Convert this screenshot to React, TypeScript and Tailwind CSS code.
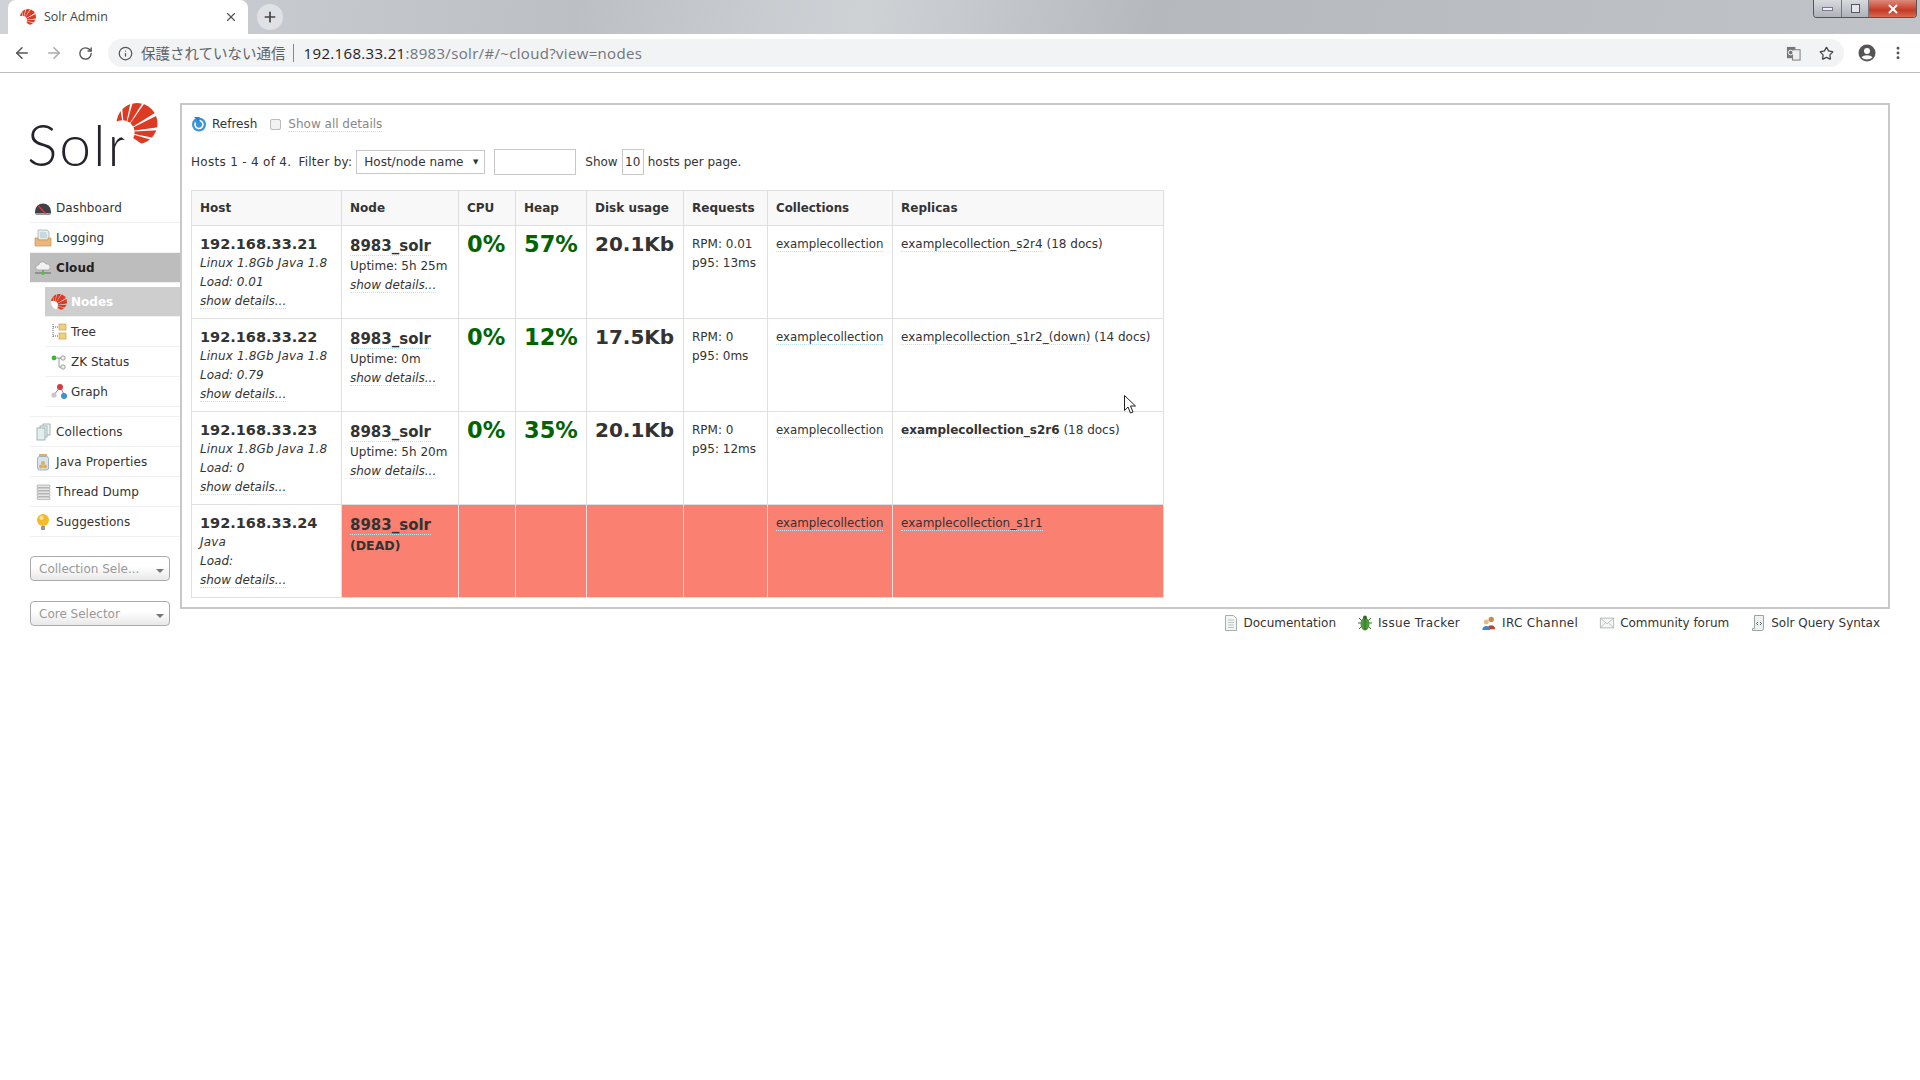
import { ArrowLeft, ArrowRight, RotateCw, Info, Star, MoreVertical, Plus, X } from 'lucide-react';
import type { ReactNode } from 'react';

type Host = {
  ip: string;
  info: string;
  load: string;
  uptime?: string;
  cpu?: string;
  heap?: string;
  disk?: string;
  rpm?: string;
  p95?: string;
  replica: ReactNode;
  dead?: boolean;
};

const hosts: Host[] = [
  {
    ip: '192.168.33.21', info: 'Linux 1.8Gb Java 1.8', load: 'Load: 0.01', uptime: 'Uptime: 5h 25m',
    cpu: '0%', heap: '57%', disk: '20.1Kb', rpm: 'RPM: 0.01', p95: 'p95: 13ms',
    replica: <><Dotted>examplecollection_s2r4</Dotted> (18 docs)</>,
  },
  {
    ip: '192.168.33.22', info: 'Linux 1.8Gb Java 1.8', load: 'Load: 0.79', uptime: 'Uptime: 0m',
    cpu: '0%', heap: '12%', disk: '17.5Kb', rpm: 'RPM: 0', p95: 'p95: 0ms',
    replica: <><Dotted>examplecollection_s1r2_(down)</Dotted> (14 docs)</>,
  },
  {
    ip: '192.168.33.23', info: 'Linux 1.8Gb Java 1.8', load: 'Load: 0', uptime: 'Uptime: 5h 20m',
    cpu: '0%', heap: '35%', disk: '20.1Kb', rpm: 'RPM: 0', p95: 'p95: 12ms',
    replica: <><Dotted><b>examplecollection_s2r6</b></Dotted> (18 docs)</>,
  },
  {
    ip: '192.168.33.24', info: 'Java', load: 'Load:', dead: true,
    replica: <Dotted>examplecollection_s1r1</Dotted>,
  },
];

function Dotted({ children }: { children: ReactNode }) {
  return <span className="border-b border-dotted border-[#bde3f5]">{children}</span>;
}

// the Solr sun: red rays fanning out of a point low on the left
function SolrSun({ className, id }: { className: string; id: string }) {
  const fx = 19;
  const fy = 71;
  const rays = [[-125, -100], [-95, -78], [-74, -58], [-55, -32], [-27, -8], [-3, 11], [16, 34]];
  const pt = (a: number) => `${fx + 150 * Math.cos((a * Math.PI) / 180)},${fy + 150 * Math.sin((a * Math.PI) / 180)}`;
  return (
    <svg viewBox="0 0 100 100" className={className}>
      <clipPath id={id}><circle cx="50" cy="50" r="50" /></clipPath>
      <g clipPath={`url(#${id})`}>
        {rays.map(([a, b]) => (
          <polygon key={a} points={`${fx},${fy} ${pt(a)} ${pt(b)}`} fill="#dc3a22" />
        ))}
        <circle cx="14" cy="72" r="30" fill="white" />
      </g>
    </svg>
  );
}

function Dashboard() {
  return (
    <svg viewBox="0 0 18 18" className="w-[18px] h-[18px]">
      <path d="M1 12.500a8 8 0 0 1 16 0v2H1z" fill="#3f3f46" />
      <path d="M1 14.500h16l-1 1.500H2z" fill="#9a9a9a" />
      <path d="M4.500 7l7 7.500" stroke="#e33" strokeWidth="1.200" />
    </svg>
  );
}
function Logging() {
  return (
    <svg viewBox="0 0 18 18" className="w-[18px] h-[18px]">
      <path d="M4 1h9l2 2v8H4z" fill="#e4efe9" stroke="#9ab" strokeWidth=".7" />
      <path d="M6 4h6M6 6h7M6 8h7" stroke="#9bb" strokeWidth=".8" />
      <path d="M1 9h3v2h10V9h3v8H1z" fill="#eab77c" stroke="#c89258" strokeWidth=".7" />
    </svg>
  );
}
function CloudIcon() {
  return (
    <svg viewBox="0 0 18 18" className="w-[18px] h-[18px]">
      <path d="M4 11a2.500 2.500 0 0 1 .5-5 4 4 0 0 1 7.500-1 3 3 0 0 1 2 6z" fill="#f2f2f5" stroke="#999" strokeWidth=".7" />
      <path d="M1 14h16" stroke="#666" strokeWidth="1" />
      <path d="M9 11v3" stroke="#666" strokeWidth="1" />
      <circle cx="9" cy="14.500" r="1.600" fill="#4c3" />
    </svg>
  );
}
function TreeIcon() {
  return (
    <svg viewBox="0 0 16 18" className="w-4 h-[18px]">
      <path d="M2 1v14M2 4h6M2 13h6" stroke="#667" strokeWidth="1" strokeDasharray="1 1" fill="none" />
      <rect x="8" y="1" width="7" height="6" fill="#f0cf7e" stroke="#c9a24f" strokeWidth=".7" />
      <rect x="8" y="10" width="7" height="6" fill="#f0cf7e" stroke="#c9a24f" strokeWidth=".7" />
    </svg>
  );
}
function ZkIcon() {
  return (
    <svg viewBox="0 0 16 18" className="w-4 h-[18px]">
      <path d="M3 5h8M8 5v9h3" stroke="#999" strokeWidth="1" fill="none" />
      <circle cx="3" cy="5" r="2.400" fill="#3fb535" />
      <circle cx="12" cy="5" r="2.200" fill="#eee" stroke="#888" strokeWidth=".8" />
      <circle cx="12" cy="14" r="2.200" fill="#eee" stroke="#888" strokeWidth=".8" />
    </svg>
  );
}
function GraphIcon() {
  return (
    <svg viewBox="0 0 16 18" className="w-4 h-[18px]">
      <path d="M3 12l6-8 5 9" stroke="#888" strokeWidth="1" fill="none" />
      <circle cx="9" cy="4" r="3" fill="#d33c40" />
      <circle cx="3" cy="12" r="2.600" fill="#c8c8c8" />
      <circle cx="13" cy="13" r="3" fill="#3c8fd8" />
    </svg>
  );
}
function CollectionsIcon() {
  return (
    <svg viewBox="0 0 18 18" className="w-[18px] h-[18px]">
      <rect x="9" y="1" width="7" height="11" fill="#eef3f3" stroke="#8fa5a8" strokeWidth=".8" />
      <rect x="6" y="3" width="7" height="11" fill="#eef3f3" stroke="#8fa5a8" strokeWidth=".8" />
      <rect x="3" y="5" width="8" height="12" fill="#e3eded" stroke="#8fa5a8" strokeWidth=".8" />
    </svg>
  );
}
function JavaIcon() {
  return (
    <svg viewBox="0 0 18 18" className="w-[18px] h-[18px]">
      <rect x="5" y="1" width="8" height="2.500" fill="#e0b060" />
      <rect x="3.500" y="3.500" width="11" height="13.500" rx="2" fill="#d6e2ee" stroke="#8fa5b8" strokeWidth=".8" />
      <circle cx="9" cy="10" r="2" fill="#dfae52" />
      <circle cx="7" cy="13.500" r="2" fill="#dfae52" />
      <circle cx="11" cy="13.500" r="2" fill="#dfae52" />
    </svg>
  );
}
function ThreadIcon() {
  return (
    <svg viewBox="0 0 18 18" className="w-[18px] h-[18px]">
      {[2, 5, 8, 11, 14].map((y) => (
        <rect key={y} x="3" y={y} width="13" height="2.600" rx="1" fill="#e4e4e4" stroke="#999" strokeWidth=".6" />
      ))}
    </svg>
  );
}
function BulbIcon() {
  return (
    <svg viewBox="0 0 18 18" className="w-[18px] h-[18px]">
      <circle cx="9" cy="7" r="6" fill="#f6b92c" />
      <circle cx="7.500" cy="5" r="2" fill="#fde9a8" />
      <rect x="7" y="13" width="4" height="4" fill="#999" />
    </svg>
  );
}
function DocIcon() {
  return (
    <svg viewBox="0 0 16 18" className="w-4 h-[18px]">
      <path d="M2.500 1.500h8l3 3v12h-11z" fill="#f4f6f4" stroke="#a5aeaa" />
      <path d="M5 6h6M5 8.500h6M5 11h6M5 13.500h6" stroke="#bbc4c0" />
    </svg>
  );
}
function BugIcon() {
  return (
    <svg viewBox="0 0 16 18" className="w-4 h-[18px]">
      <path d="M2 4l3 3M14 4l-3 3M1 9h3M15 9h-3M2 15l3-3M14 15l-3-3" stroke="#3c6b2c" strokeWidth="1" />
      <ellipse cx="8" cy="10" rx="4.500" ry="6.500" fill="#4e9a3a" />
      <circle cx="8" cy="3.500" r="2" fill="#2f6b26" />
      <path d="M8 5v11" stroke="#2f6b26" />
    </svg>
  );
}
function PeopleIcon() {
  return (
    <svg viewBox="0 0 18 18" className="w-4 h-4">
      <circle cx="11.500" cy="5" r="3" fill="#c98a4a" />
      <path d="M7 16c0-6 9-6 9 0z" fill="#b8452f" />
      <circle cx="6" cy="8" r="2.800" fill="#e8b98a" />
      <path d="M1.500 17c0-6 9-6 9 0z" fill="#3f86c8" />
    </svg>
  );
}
function MailIcon() {
  return (
    <svg viewBox="0 0 18 18" className="w-4 h-4">
      <rect x="1.500" y="3.500" width="15" height="11" fill="#f5f7f7" stroke="#aab4b4" />
      <path d="M2 4l7 6 7-6M2 14l5-5M16 14l-5-5" stroke="#b4bcbc" fill="none" />
    </svg>
  );
}
function ScriptIcon() {
  return (
    <svg viewBox="0 0 16 18" className="w-4 h-[18px]">
      <path d="M4.500 1.500h9v13a2 2 0 0 1-2 2h-9v-2h2z" fill="#eef2ee" stroke="#9aa5a0" />
      <path d="M8 8l-1.500 1.500L8 11M10 8l1.500 1.500L10 11" stroke="#557" fill="none" />
    </svg>
  );
}

function NavRow({ icon, label, active }: { icon: ReactNode; label: string; active?: boolean }) {
  return (
    <div className={`flex items-center h-[30px] pl-[4px] border-b border-[#f0f0f0] ${active ? 'bg-[#bdbdbd] font-bold text-[#222]' : ''}`}>
      <span className="w-[18px] flex justify-center">{icon}</span>
      <span className="ml-[4px] tracking-[0.1px]">{label}</span>
    </div>
  );
}

function SubRow({ icon, label, active }: { icon: ReactNode; label: string; active?: boolean }) {
  return (
    <div className={`flex items-center h-[30px] pl-[6px] border-b border-[#f0f0f0] ${active ? 'bg-[#cecece] text-white font-bold' : ''}`}>
      <span className="w-4 flex justify-center">{icon}</span>
      <span className="ml-[4px]">{label}</span>
    </div>
  );
}

function Selector({ label }: { label: string }) {
  return (
    <div className="relative h-[25px] w-[140px] rounded-[4px] border border-[#aaa] bg-[linear-gradient(#fff_40%,#e8e8e8)] flex items-center pl-[8px] text-[#999]">
      {label}
      <span className="absolute right-[5px] top-[12px] border-x-[4px] border-t-[4px] border-x-transparent border-t-[#777]" />
    </div>
  );
}

function FooterLink({ icon, label, wide }: { icon: ReactNode; label: string; wide?: boolean }) {
  return (
    <span className="flex items-center gap-[5px]">
      {icon}
      <span className={wide ? 'tracking-[0.3px]' : ''}>{label}</span>
    </span>
  );
}

const th = 'border border-[#dfdfdf] bg-[#f8f8f8] px-2 text-left font-bold text-[#333] h-[35px]';
const td = 'border border-[#dfdfdf] align-top px-2';

export default function App() {
  return (
    <div className="min-h-screen bg-white text-[12px] text-[#333] font-['DejaVu_Sans',sans-serif]">
      {/* browser chrome */}
      <div className="relative h-[34px] bg-[linear-gradient(100deg,#cfd2d6,#bcc0c5_30%,#cfd2d5_45%,#b5b9be_60%,#c0c4c8_100%)] flex items-end pl-2">
        <div className="w-[240px] h-[34px] bg-white rounded-t-[8px] flex items-center pl-[12px] pr-[10px] gap-[6px] text-[12.500px] text-[#444] font-['Open_Sans',sans-serif]">
          <SolrSun id="fav" className="w-[16px] h-[16px]" />
          <span className="ml-[2px] flex-1">Solr Admin</span>
          <X size={14} strokeWidth={2} className="text-[#555]" />
        </div>
        <div className="self-center ml-[9px] w-[26px] h-[26px] rounded-full bg-[#dfe1e5] flex items-center justify-center">
          <Plus size={16} strokeWidth={2.500} className="text-[#444]" />
        </div>
        <div className="absolute top-0 right-[3px] h-[18px] flex rounded-b-[4px] border border-t-0 border-[#555] overflow-hidden">
          <div className="w-[28px] bg-[linear-gradient(#d8dade,#aeb2b8)] border-r border-[#777] flex items-center justify-center">
            <span className="w-[11px] h-[4px] bg-[#eef] border border-[#778]" />
          </div>
          <div className="w-[27px] bg-[linear-gradient(#d8dade,#aeb2b8)] border-r border-[#777] flex items-center justify-center">
            <span className="w-[9px] h-[9px] border border-[#556] bg-[#e4e6ea]" />
          </div>
          <div className="w-[47px] bg-[linear-gradient(#dc8a7a,#c53a25_60%,#d86a50)] flex items-center justify-center">
            <X size={14} strokeWidth={3.500} className="text-white" />
          </div>
        </div>
      </div>
      <div className="h-[39px] border-b-[1px] border-[#bdbdbd] flex items-center pl-[13px] pr-[14px] bg-white">
        <ArrowLeft size={18} strokeWidth={2} className="text-[#555]" />
        <ArrowRight size={18} strokeWidth={2} className="text-[#aaa] ml-[14px]" />
        <RotateCw size={15} strokeWidth={2.200} className="text-[#555] ml-[15px]" />
        <div className="ml-[15px] flex-1 h-[28px] rounded-full bg-[#f1f3f4] flex items-center pl-[10px] pr-[10px] text-[15px] tracking-[0.33px] font-['Open_Sans','Noto_Sans_CJK_JP',sans-serif]">
          <Info size={15} strokeWidth={2} className="text-[#555]" />
          <span className="ml-[8px] text-[14.500px] tracking-normal text-[#5f6368] font-['Noto_Sans_CJK_JP',sans-serif]">保護されていない通信</span>
          <span className="ml-[7px] mr-[10px] h-[18px] w-px bg-[#888]" />
          <span className="text-[#222]">192.168.33.21</span>
          <span className="text-[#70757a]">:8983/solr/#/~cloud?view=nodes</span>
          <svg viewBox="0 0 16 16" className="ml-auto mr-[18px] w-[15px] h-[15px]">
            <rect x="1" y="1" width="9" height="12" fill="#777" />
            <rect x="7" y="4" width="8" height="11" fill="#eee" stroke="#777" />
            <circle cx="5" cy="7" r="2.500" fill="none" stroke="#fff" />
          </svg>
          <Star size={15} strokeWidth={2} className="text-[#444]" />
        </div>
        <svg viewBox="0 0 18 18" className="ml-[14px] w-[18px] h-[18px]">
          <circle cx="9" cy="9" r="8.500" fill="#555" />
          <circle cx="9" cy="7" r="3" fill="#fff" />
          <path d="M3.500 13.500c2-3 9-3 11 0-3 2.500-8 2.500-11 0z" fill="#fff" />
        </svg>
        <MoreVertical size={16} strokeWidth={2.400} className="ml-[14px] text-[#555]" />
      </div>

      {/* solr admin */}
      <div className="flex pl-[30px] pr-[30px] pt-[30px]">
        <aside className="w-[150px] shrink-0 text-[#333]">
          <div className="relative h-[90px]">
            <span className="absolute left-[-3px] top-[3px] text-[57px] leading-[76px] tracking-[2px] font-light text-[#23232d] font-['Lato',sans-serif]">Solr</span>
            <SolrSun id="logo" className="absolute left-[86px] top-0 w-[42px] h-[41px]" />
          </div>
          <div>
            <NavRow icon={<Dashboard />} label="Dashboard" />
            <NavRow icon={<Logging />} label="Logging" />
            <NavRow icon={<CloudIcon />} label="Cloud" active />
            <div className="ml-[15px] mt-[4px] mb-[9px]">
              <SubRow icon={<SolrSun id="nodes" className="w-[16px] h-[16px]" />} label="Nodes" active />
              <SubRow icon={<TreeIcon />} label="Tree" />
              <SubRow icon={<ZkIcon />} label="ZK Status" />
              <SubRow icon={<GraphIcon />} label="Graph" />
            </div>
            <div className="border-t border-[#f0f0f0]">
              <NavRow icon={<CollectionsIcon />} label="Collections" />
              <NavRow icon={<JavaIcon />} label="Java Properties" />
              <NavRow icon={<ThreadIcon />} label="Thread Dump" />
              <NavRow icon={<BulbIcon />} label="Suggestions" />
            </div>
          </div>
          <div className="mt-[19px] flex flex-col gap-[20px]">
            <Selector label="Collection Sele..." />
            <Selector label="Core Selector" />
          </div>
        </aside>

        <div className="flex-1">
          <main className="h-[506px] border-[2px] border-[#c8c8c8] px-[9px] pt-[9px]">
            <div className="flex items-center h-[20px]">
              <svg viewBox="0 0 16 16" className="w-[16px] h-[16px]">
                <circle cx="8" cy="8.500" r="7" fill="#3b93d8" />
                <path d="M8 4.500a4 4 0 1 1-3.500 2" stroke="#fff" strokeWidth="1.600" fill="none" />
                <path d="M3 1h5.500v5.500z" fill="#2a7fc8" />
              </svg>
              <span className="ml-[5px]"><Dotted>Refresh</Dotted></span>
              <span className="ml-[13px] w-[11px] h-[11px] rounded-[2px] border border-[#bbb] bg-[#f2f2f2]" />
              <span className="ml-[7px] text-[#888]"><Dotted>Show all details</Dotted></span>
            </div>
            <div className="flex items-center mt-[15px] h-[26px]">
              <span className="tracking-[0.3px]">Hosts 1 - 4 of 4.</span>
              <span className="ml-[7px] tracking-[0.25px]">Filter by:</span>
              <div className="ml-[4px] w-[129px] h-[24px] border border-[#c8c8c8] flex items-center justify-between pl-[7px] pr-[6px]">
                Host/node name
                <span className="text-[7px]">▼</span>
              </div>
              <div className="ml-[9px] w-[82px] h-[26px] border border-[#c8c8c8]" />
              <span className="ml-[9px]">Show</span>
              <div className="ml-[4px] w-[22px] h-[26px] border border-[#c8c8c8] flex items-center justify-center">10</div>
              <span className="ml-[4px]">hosts per page.</span>
            </div>
            <table className="mt-[15px] w-[972px] table-fixed border-collapse leading-[19px]">
              <thead>
                <tr>
                  <th className={`${th} w-[150px]`}>Host</th>
                  <th className={`${th} w-[117px]`}>Node</th>
                  <th className={`${th} w-[57px]`}>CPU</th>
                  <th className={`${th} w-[71px]`}>Heap</th>
                  <th className={`${th} w-[97px]`}>Disk usage</th>
                  <th className={`${th} w-[84px]`}>Requests</th>
                  <th className={`${th} w-[125px] text-[11.800px]`}>Collections</th>
                  <th className={`${th} w-[271px]`}>Replicas</th>
                </tr>
              </thead>
              <tbody>
                {hosts.map((h) => (
                  <tr key={h.ip} className="h-[93px]">
                    <td className={`${td} pt-[9px]`}>
                      <div className="text-[14.500px] font-bold">{h.ip}</div>
                      <div className="italic tracking-[0.15px]">{h.info}</div>
                      <div className="italic">{h.load}</div>
                      <div className="italic"><Dotted>show details...</Dotted></div>
                    </td>
                    <td className={`${td} pt-[11px] ${h.dead ? 'bg-[#fa8072]' : ''}`}>
                      <div className="text-[15px] font-bold"><Dotted>8983_solr</Dotted></div>
                      {h.dead ? (
                        <div className="font-bold mt-[1px] text-[12.500px]">(DEAD)</div>
                      ) : (
                        <>
                          <div className="mt-[1px]">{h.uptime}</div>
                          <div className="italic"><Dotted>show details...</Dotted></div>
                        </>
                      )}
                    </td>
                    <td className={`${td} pt-[5px] text-[22.500px] leading-[26px] font-bold text-[#006400] ${h.dead ? 'bg-[#fa8072]' : ''}`}>{h.cpu}</td>
                    <td className={`${td} pt-[5px] text-[22.500px] leading-[26px] font-bold text-[#006400] ${h.dead ? 'bg-[#fa8072]' : ''}`}>{h.heap}</td>
                    <td className={`${td} pt-[5px] text-[20px] leading-[26px] font-bold ${h.dead ? 'bg-[#fa8072]' : ''}`}>{h.disk}</td>
                    <td className={`${td} pt-[9px] ${h.dead ? 'bg-[#fa8072]' : ''}`}>
                      <div>{h.rpm}</div>
                      <div>{h.p95}</div>
                    </td>
                    <td className={`${td} pt-[9px] text-[11.800px] ${h.dead ? 'bg-[#fa8072]' : ''}`}><Dotted>examplecollection</Dotted></td>
                    <td className={`${td} pt-[9px] ${h.dead ? 'bg-[#fa8072]' : ''}`}>{h.replica}</td>
                  </tr>
                ))}
              </tbody>
            </table>
          </main>
          <footer className="flex justify-end gap-[21px] pr-[10px] mt-[4px] h-[20px] items-center">
            <FooterLink icon={<DocIcon />} label="Documentation" />
            <FooterLink icon={<BugIcon />} label="Issue Tracker" wide />
            <FooterLink icon={<PeopleIcon />} label="IRC Channel" wide />
            <FooterLink icon={<MailIcon />} label="Community forum" />
            <FooterLink icon={<ScriptIcon />} label="Solr Query Syntax" />
          </footer>
        </div>
      </div>

      {/* mouse pointer sitting on the page */}
      <svg viewBox="0 0 12 19" className="absolute left-[1124px] top-[395px] w-[12px] h-[19px]">
        <path d="M.5.500v15l3.500-3.500 2.500 6 2.500-1-2.500-6h5z" fill="#fff" stroke="#222" strokeWidth="1" />
      </svg>
    </div>
  );
}
